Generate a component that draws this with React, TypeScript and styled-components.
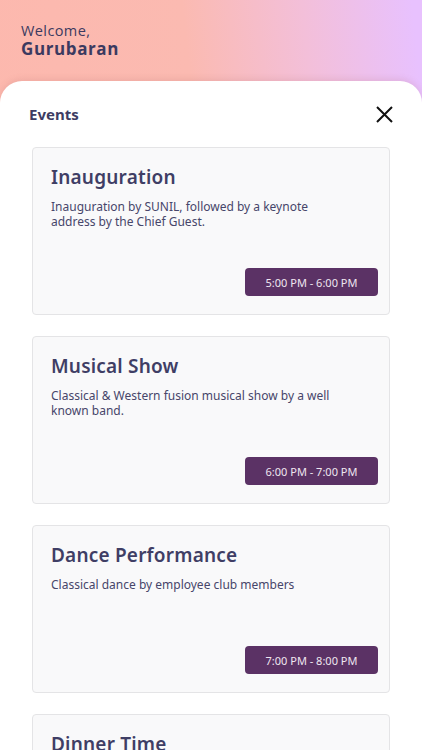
import styled, { createGlobalStyle } from "styled-components";

const GlobalStyle = createGlobalStyle`
  * { box-sizing: border-box; }
  body {
    margin: 0;
    font-family: "Noto Sans", "Open Sans", sans-serif;
    background: #ffffff;
  }
`;

const Page = styled.div`
  width: 422px;
  height: 750px;
  overflow: hidden;
  background: linear-gradient(84deg, #fdb8ad 0%, #fbbab1 52%, #f3bfd9 76%, #e8c1fe 98%);
`;

const Header = styled.header`
  height: 81px;
  padding: 22px 21px 0;
  color: #3b3a60;
`;

const Welcome = styled.div`
  font-family: "Open Sans", sans-serif;
  font-size: 14.5px;
  letter-spacing: 0.4px;
  line-height: 17px;
`;

const Name = styled.div`
  font-family: "Open Sans", sans-serif;
  font-size: 17px;
  font-weight: 700;
  letter-spacing: 0.6px;
  line-height: 19px;
`;

const Sheet = styled.main`
  background: #ffffff;
  border-radius: 22px 22px 0 0;
  box-shadow: 0 -2px 6px rgba(160, 90, 90, 0.15);
  padding: 22px 32px 0;
  min-height: 669px;
`;

const SheetHead = styled.div`
  display: flex;
  align-items: center;
  justify-content: space-between;
  margin: 0 -4px 22px -3px;
  height: 22px;
`;

const SheetTitle = styled.h2`
  margin: 0;
  font-size: 15px;
  font-weight: 700;
  color: #3d3c63;
`;

const CloseBtn = styled.button`
  border: none;
  background: none;
  padding: 0;
  width: 20px;
  height: 20px;
  display: flex;
  align-items: center;
  justify-content: center;
  cursor: pointer;
`;

const List = styled.div`
  display: flex;
  flex-direction: column;
  gap: 21px;
`;

const Card = styled.section`
  height: 168px;
  background: #f9f9fa;
  border: 1px solid #e4e4e6;
  border-radius: 4px;
  padding: 16px 11px 18px 18px;
  display: flex;
  flex-direction: column;
`;

const Title = styled.h3`
  margin: 0 0 9px;
  font-size: 19px;
  font-weight: 600;
  color: #3f3e65;
  letter-spacing: 0.2px;
`;

const Desc = styled.p`
  margin: 0;
  max-width: 285px;
  font-size: 12px;
  line-height: 15px;
  color: #47466a;
`;

const Time = styled.div`
  margin-top: auto;
  align-self: flex-end;
  width: 133px;
  height: 28px;
  border-radius: 4px;
  background: #5b3265;
  color: #efe6f0;
  font-size: 11px;
  display: flex;
  align-items: center;
  justify-content: center;
`;

const events = [
  {
    title: "Inauguration",
    desc: "Inauguration by SUNIL, followed by a keynote address by the Chief Guest.",
    time: "5:00 PM - 6:00 PM",
  },
  {
    title: "Musical Show",
    desc: "Classical & Western fusion musical show by a well known band.",
    time: "6:00 PM - 7:00 PM",
  },
  {
    title: "Dance Performance",
    desc: "Classical dance by employee club members",
    time: "7:00 PM - 8:00 PM",
  },
  {
    title: "Dinner Time",
    desc: "Dinner for all the guests and employees.",
    time: "8:00 PM - 9:00 PM",
  },
];

export default function App() {
  return (
    <Page>
      <GlobalStyle />
      <Header>
        <Welcome>Welcome,</Welcome>
        <Name>Gurubaran</Name>
      </Header>
      <Sheet>
        <SheetHead>
          <SheetTitle>Events</SheetTitle>
          <CloseBtn aria-label="Close">
            <svg width="17" height="17" viewBox="0 0 17 17">
              <path d="M1 1 L16 16 M16 1 L1 16" stroke="#111" strokeWidth="2" />
            </svg>
          </CloseBtn>
        </SheetHead>
        <List>
          {events.map((e) => (
            <Card key={e.title}>
              <Title>{e.title}</Title>
              <Desc>{e.desc}</Desc>
              <Time>{e.time}</Time>
            </Card>
          ))}
        </List>
      </Sheet>
    </Page>
  );
}
